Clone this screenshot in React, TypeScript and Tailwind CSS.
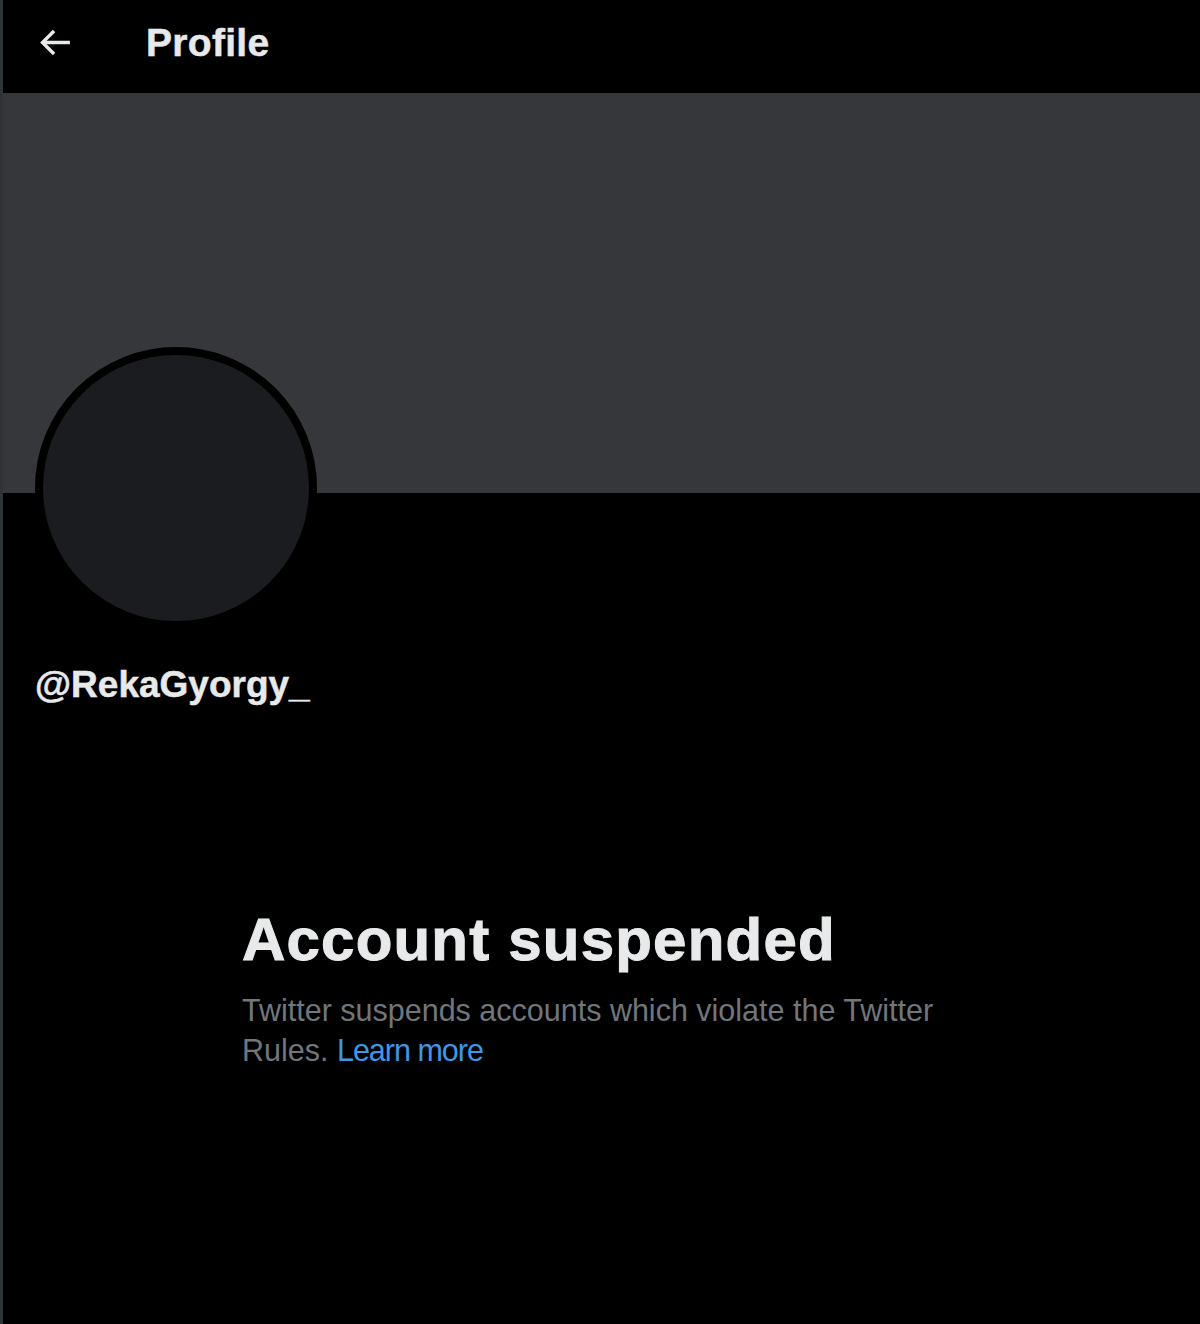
export default function App() {
  return (
    <div
      className="min-h-[1324px] w-[1200px] bg-black border-l-[3px] border-[#2f3336] text-[#e7e9ea]"
      style={{ fontFamily: '"Liberation Sans", Arial, sans-serif' }}
    >
      {/* header */}
      <div className="flex h-[93px] items-center pb-2 pl-[31px]">
        <svg viewBox="0 0 24 24" className="h-[41px] w-[41px] fill-[#e7e9ea]">
          <path d="M7.414 13l5.043 5.04-1.414 1.42L3.586 12l7.457-7.46 1.414 1.42L7.414 11H21v2H7.414z" />
        </svg>
        <h1 className="ml-[71px] text-[39px] font-bold leading-none tracking-[0.3px] [-webkit-text-stroke:0.5px_#e7e9ea]">
          Profile
        </h1>
      </div>

      {/* banner */}
      <div className="h-[400px] bg-[#36373b]" />

      {/* avatar + handle */}
      <div className="pl-[32px]">
        <div className="-mt-[146px] h-[282px] w-[282px] rounded-full border-[8px] border-black bg-[#1b1c20]" />
        <div className="mt-[34px] text-[37px] font-bold leading-[1.2] [-webkit-text-stroke:0.5px_#e7e9ea]">
          @RekaGyorgy_
        </div>
      </div>

      {/* suspended notice */}
      <div className="mx-auto mt-[197px] w-[719px]">
        <h2 className="text-[60px] font-bold leading-[1.2] tracking-[1.2px] [-webkit-text-stroke:1px_#e7e9ea]">
          Account suspended
        </h2>
        <p className="mt-[14px] text-[30.5px] leading-[40px] text-[#71767b]">
          Twitter suspends accounts which violate the Twitter Rules.{' '}
          <span className="tracking-[-1px] text-[#3d98e8]">Learn more</span>
        </p>
      </div>
    </div>
  );
}
